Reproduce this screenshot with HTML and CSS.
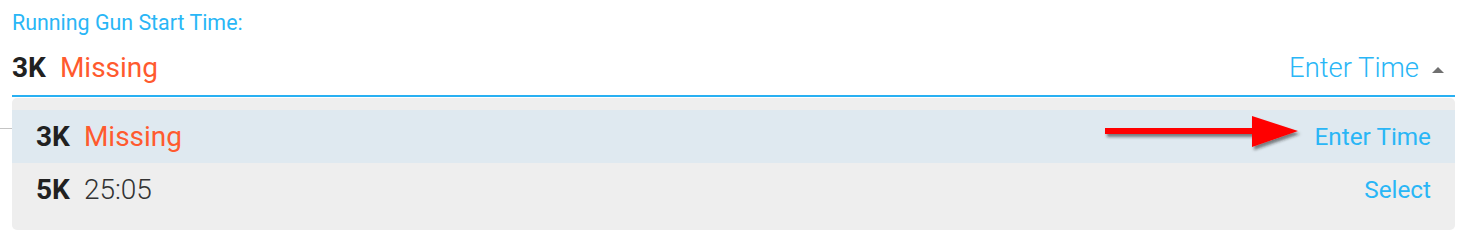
FILE: index.html
```html
<!DOCTYPE html>
<html>
<head>
<meta charset="utf-8">
<link rel="stylesheet" href="styles.css">
</head>
<body>
<div class="page">
  <div class="backline"></div>
  <div class="field">
    <div class="label">Running Gun Start Time:</div>
    <div class="control">
      <div class="value"><span class="dist">3K</span><span class="missing">Missing</span></div>
      <div class="action"><span class="enter">Enter Time</span><span class="caret"></span></div>
    </div>
  </div>
  <div class="menu">
    <div class="item active">
      <div class="value"><span class="dist">3K</span><span class="missing">Missing</span></div>
      <span class="link">Enter Time</span>
    </div>
    <div class="item">
      <div class="value"><span class="dist">5K</span><span class="time">25:05</span></div>
      <span class="link">Select</span>
    </div>
  </div>
  <svg class="arrow" width="210" height="44" viewBox="0 0 210 44">
    <defs>
      <filter id="sh" x="-10%" y="-30%" width="130%" height="180%">
        <feDropShadow dx="2" dy="3" stdDeviation="1.4" flood-color="#222" flood-opacity="0.55"/>
      </filter>
    </defs>
    <g filter="url(#sh)" fill="#ff0000">
      <rect x="5" y="18" width="150" height="6"/>
      <polygon points="152,6 198,21 152,37"/>
    </g>
  </svg>
</div>
</body>
</html>
```
FILE: styles.css
```css
html, body {
  margin: 0;
  padding: 0;
  background: #ffffff;
}
body {
  font-family: Roboto, "Liberation Sans", Arial, sans-serif;
  width: 1463px;
  height: 234px;
  overflow: hidden;
}
.page {
  position: relative;
  height: 234px;
}
.backline {
  position: absolute;
  left: 0;
  top: 128px;
  width: 14px;
  height: 1px;
  background: #c4c4c4;
}
.field {
  margin-left: 12px;
  width: 1443px;
}
.label {
  padding-top: 12px;
  font-size: 21.4px;
  line-height: 21px;
  color: #29b6f6;
}
.control {
  display: flex;
  justify-content: space-between;
  align-items: center;
  padding: 21px 11px 13px 0;
  border-bottom: 2px solid #29b0f2;
  font-size: 28px;
  line-height: 28px;
}
.value {
  display: flex;
  align-items: baseline;
}
.dist {
  font-weight: 700;
  color: #212121;
}
.missing {
  margin-left: 14px;
  color: #ff5a2e;
}
.time {
  margin-left: 14px;
  font-weight: 300;
  color: #333333;
}
.action {
  display: flex;
  align-items: center;
}
.enter {
  font-size: 27.4px;
  font-weight: 300;
  color: #29b6f6;
}
.caret {
  width: 0;
  height: 0;
  margin-left: 13px;
  margin-top: 3px;
  border-left: 6.5px solid transparent;
  border-right: 6.5px solid transparent;
  border-bottom: 6.5px solid #707070;
}
.menu {
  position: relative;
  z-index: 1;
  margin: 1px 0 0 12px;
  width: 1443px;
  padding: 12px 0 14px;
  background: #eeeeee;
  border-radius: 5px;
  font-size: 28px;
  line-height: 28px;
}
.item {
  display: flex;
  justify-content: space-between;
  align-items: center;
  height: 53px;
  padding: 0 24px;
}
.item.active {
  background: #dfe9f0;
}
.link {
  font-size: 24.3px;
  color: #29b6f6;
}
.arrow {
  position: absolute;
  left: 1100px;
  top: 110px;
  z-index: 2;
}
```
